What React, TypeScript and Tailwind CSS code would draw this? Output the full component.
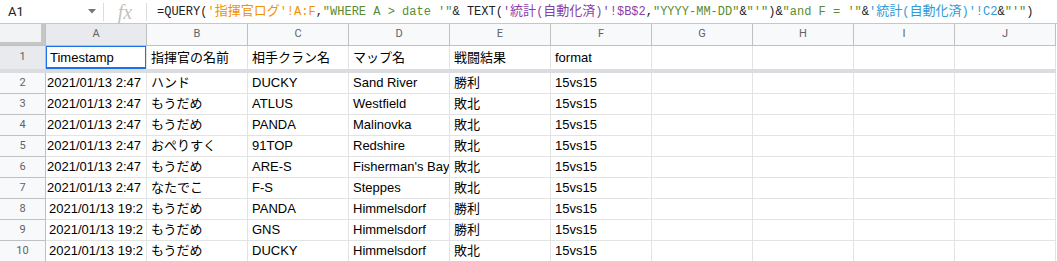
import React from "react";

const cols = ["A", "B", "C", "D", "E", "F", "G", "H", "I", "J"];

type Row = { n: number; cells: string[]; dt?: "a" | "b" };

const rows: Row[] = [
  { n: 2, cells: ["2021/01/13 2:47", "ハンド", "DUCKY", "Sand River", "勝利", "15vs15"], dt: "a" },
  { n: 3, cells: ["2021/01/13 2:47", "もうだめ", "ATLUS", "Westfield", "敗北", "15vs15"], dt: "a" },
  { n: 4, cells: ["2021/01/13 2:47", "もうだめ", "PANDA", "Malinovka", "敗北", "15vs15"], dt: "a" },
  { n: 5, cells: ["2021/01/13 2:47", "おぺりすく", "91TOP", "Redshire", "敗北", "15vs15"], dt: "a" },
  { n: 6, cells: ["2021/01/13 2:47", "もうだめ", "ARE-S", "Fisherman's Bay", "敗北", "15vs15"], dt: "a" },
  { n: 7, cells: ["2021/01/13 2:47", "なたでこ", "F-S", "Steppes", "敗北", "15vs15"], dt: "a" },
  { n: 8, cells: ["2021/01/13 19:2", "もうだめ", "PANDA", "Himmelsdorf", "勝利", "15vs15"], dt: "b" },
  { n: 9, cells: ["2021/01/13 19:2", "もうだめ", "GNS", "Himmelsdorf", "勝利", "15vs15"], dt: "b" },
  { n: 10, cells: ["2021/01/13 19:2", "もうだめ", "DUCKY", "Himmelsdorf", "敗北", "15vs15"], dt: "b" },
];

const header1 = ["Timestamp", "指揮官の名前", "相手クラン名", "マップ名", "戦闘結果", "format"];

const cellFont = "font-['Liberation_Sans','Noto_Sans_CJK_JP',sans-serif]";

function J({ children }: { children: React.ReactNode }) {
  return <span className="text-[13px]">{children}</span>;
}

function FormulaBar() {
  const orange = "text-[#f09300]";
  const green = "text-[#5b8d2f]";
  const purple = "text-[#8a3ea8]";
  const blue = "text-[#2e9bd6]";
  const dark = "text-[#202124]";
  return (
    <div className="flex h-[24px] items-center border-b border-[#c7c7c7] bg-white">
      <div className="flex h-full w-[103px] items-center justify-between pl-[8px] pr-[7px]">
        <span className="font-['Roboto','Liberation_Sans',sans-serif] text-[13px] text-[#202124]">A1</span>
        <svg width="8" height="5" viewBox="0 0 8 5">
          <path d="M0 0 L8 0 L4 4.5 Z" fill="#757575" />
        </svg>
      </div>
      <div className="h-[18px] w-px bg-[#dadce0]" />
      <div className="flex w-[42px] items-center justify-center">
        <span className="font-['Liberation_Serif',serif] text-[20px] italic leading-none text-[#c2c2c2]">fx</span>
      </div>
      <div className="h-[18px] w-px bg-[#dadce0]" />
      <div className="ml-[10px] whitespace-pre font-['Liberation_Mono','Noto_Sans_CJK_JP',monospace] text-[12px] leading-none">
        <span className={dark}>=QUERY(</span>
        <span className={orange}>'<J>指揮官ログ</J>'!A:F</span>
        <span className={dark}>,</span>
        <span className={green}>"WHERE A &gt; date '"</span>
        <span className={dark}>&amp; TEXT(</span>
        <span className={purple}>'<J>統計</J>(<J>自動化済</J>)'!$B$2</span>
        <span className={dark}>,</span>
        <span className={green}>"YYYY-MM-DD"</span>
        <span className={dark}>&amp;</span>
        <span className={green}>"'"</span>
        <span className={dark}>)&amp;</span>
        <span className={green}>"and F = '"</span>
        <span className={dark}>&amp;</span>
        <span className={blue}>'<J>統計</J>(<J>自動化済</J>)'!C2</span>
        <span className={dark}>&amp;</span>
        <span className={green}>"'"</span>
        <span className={dark}>)</span>
      </div>
    </div>
  );
}

export default function App() {
  return (
    <div className="h-[261px] w-[1057px] overflow-hidden bg-white">
      <FormulaBar />
      <div className="grid grid-cols-[46px_repeat(10,101px)]">
        <div className="relative h-[22px] border-r border-b border-[#c0c0c0] bg-[#f1f3f4]">
          <div className="absolute right-0 top-0 h-full w-[4px] bg-[#c4c7c5]" />
          <div className="absolute bottom-0 left-0 h-[3px] w-full bg-[#c4c7c5]" />
        </div>
        {cols.map((c, i) => (
          <div
            key={c}
            className={`flex h-[22px] items-center justify-center border-r border-b border-[#c0c0c0] font-['Roboto','Liberation_Sans',sans-serif] text-[11px] text-[#5f6368] ${
              i === 0 ? "bg-[#e8eaed]" : "bg-[#f8f9fa]"
            }`}
          >
            {c}
          </div>
        ))}

        <div className="flex h-[23px] items-center justify-center border-r border-[#c0c0c0] bg-[#e8eaed] font-['Roboto','Liberation_Sans',sans-serif] text-[11px] text-[#5f6368]">
          1
        </div>
        {cols.map((c, i) => (
          <div
            key={"r1" + c}
            className={`relative flex h-[23px] items-end overflow-hidden whitespace-nowrap border-r border-[#e2e3e3] pb-[3px] pl-[4px] ${cellFont} text-[13px] leading-[16px] text-[#000]`}
          >
            {header1[i] ?? ""}
            {i === 0 && <div className="absolute -left-px -top-px h-[24px] w-[102px] border-2 border-[#1a73e8]" />}
          </div>
        ))}

        <div className="col-span-11 h-[4px] bg-[#dadce0]" />

        {rows.map((r) => (
          <React.Fragment key={r.n}>
            <div className="flex h-[21px] items-center justify-center border-r border-b border-[#c0c0c0] bg-[#f8f9fa] font-['Roboto','Liberation_Sans',sans-serif] text-[11px] text-[#5f6368]">
              {r.n}
            </div>
            {cols.map((c, i) => (
              <div
                key={r.n + c}
                className={`flex h-[21px] items-end overflow-hidden whitespace-nowrap border-r border-b border-[#e2e3e3] pb-[2px] ${
                  i === 0 ? (r.dt === "a" ? "pl-[1px]" : "pl-[3px]") : "pl-[4px]"
                } ${cellFont} text-[13px] leading-[16px] text-[#000]`}
              >
                {r.cells[i] ?? ""}
              </div>
            ))}
          </React.Fragment>
        ))}
      </div>
    </div>
  );
}
